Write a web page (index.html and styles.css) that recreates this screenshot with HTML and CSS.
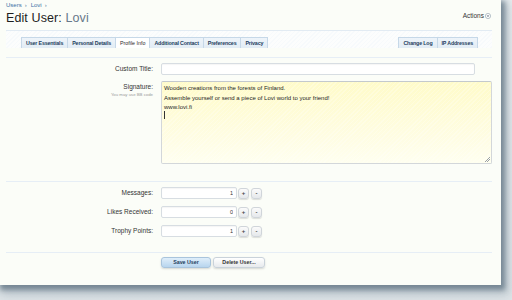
FILE: index.html
```html
<!DOCTYPE html>
<html>
<head>
<meta charset="utf-8">
<link rel="stylesheet" href="styles.css">
</head>
<body>
<div class="window">
  <div class="header">
    <div class="crumbs"><a class="crumb">Users</a><span class="sep">›</span><a class="crumb">Lovi</a><span class="sep">›</span></div>
    <div class="titlerow">
      <h1 class="title">Edit User: <span class="name">Lovi</span></h1>
      <div class="actions">Actions <span class="acticon"><svg width="6" height="6" viewBox="0 0 6 6"><circle cx="3" cy="3" r="2.6" fill="#fff" stroke="#8a9aa8" stroke-width="0.6"/><path d="M1.7 2.4 L4.3 2.4 L3 3.9 Z" fill="#5a6a78"/></svg></span></div>
    </div>
  </div>
  <div class="tabbar">
    <div class="tabs">
      <span class="tab">User Essentials</span><span class="tab">Personal Details</span><span class="tab active">Profile Info</span><span class="tab">Additional Contact</span><span class="tab">Preferences</span><span class="tab">Privacy</span>
    </div>
    <div class="tabs">
      <span class="tab">Change Log</span><span class="tab">IP Addresses</span>
    </div>
  </div>
  <div class="divider first"></div>
  <div class="row r-title">
    <div class="label">Custom Title:</div>
    <div class="field"><input class="text wide" type="text"></div>
  </div>
  <div class="row r-sig">
    <div class="label"><div>Signature:</div><div class="hint">You may use BB code</div></div>
    <div class="field"><div class="sigwrap"><textarea class="sig">Wooden creations from the forests of Finland.
Assemble yourself or send a piece of Lovi world to your friend!
www.lovi.fi
</textarea><span class="grip"></span><span class="caret"></span></div></div>
  </div>
  <div class="divider second"></div>
  <div class="row r-num">
    <div class="label">Messages:</div>
    <div class="field spin"><input class="text num" type="text" value="1"><span class="sbtn">+</span><span class="sbtn minus">-</span></div>
  </div>
  <div class="row r-num">
    <div class="label">Likes Received:</div>
    <div class="field spin"><input class="text num" type="text" value="0"><span class="sbtn">+</span><span class="sbtn minus">-</span></div>
  </div>
  <div class="row r-num">
    <div class="label">Trophy Points:</div>
    <div class="field spin"><input class="text num" type="text" value="1"><span class="sbtn">+</span><span class="sbtn minus">-</span></div>
  </div>
  <div class="divider third"></div>
  <div class="row r-btns">
    <div class="label"></div>
    <div class="field"><span class="button primary">Save User</span><span class="button">Delete User...</span></div>
  </div>
</div>
</body>
</html>
```

FILE: styles.css
```css
html, body {
  margin: 0;
  padding: 0;
}
body {
  width: 512px;
  height: 300px;
  overflow: hidden;
  background: linear-gradient(180deg, #e9edef, #dfe5e8);
  font-family: "Liberation Sans", Arial, sans-serif;
}
.window {
  width: 501px;
  height: 285px;
  background: #fbfdf8;
  box-shadow: 2px 3px 5px 2px rgba(95, 115, 130, 0.75), 4px 6px 10px 4px rgba(120, 140, 155, 0.35);
  overflow: hidden;
}
.header {
  padding: 2px 10px 0 6px;
}
.crumbs {
  font-size: 6px;
  line-height: 7px;
  height: 7px;
  color: #2e68a3;
}
.crumb { color: #3a6fa6; }
.sep { margin: 0 4px 0 3px; color: #5d7f9e; }
.titlerow {
  display: flex;
  justify-content: space-between;
  align-items: flex-start;
  margin-top: 2px;
}
.title {
  margin: 0;
  font-weight: normal;
  font-size: 12.5px;
  line-height: 14px;
  color: #1e1e1e;
  letter-spacing: 0.1px;
}
.name { color: #67788a; }
.actions {
  font-size: 6.5px;
  line-height: 7px;
  margin-top: 1px;
  color: #333;
  display: flex;
  align-items: center;
  gap: 1px;
}
.acticon { display: inline-flex; }
.tabbar {
  margin: 5px 9px 0 6px;
  height: 17px;
  border-top: 1px solid #e2ebf3;
  background: repeating-linear-gradient(135deg, #f7fafc 0 1px, #fcfdfd 1px 3px);
  display: flex;
  justify-content: space-between;
  align-items: flex-end;
  padding: 0 15px;
}
.tabs { display: flex; }
.tab {
  font-size: 5.3px;
  line-height: 9px;
  height: 9px;
  padding: 1px 4px 0;
  border: 1px solid #c6d8e8;
  border-bottom: none;
  margin-right: -1px;
  background: linear-gradient(180deg, #eef4fa, #e2ecf5);
  color: #23405e;
  font-weight: bold;
  letter-spacing: -0.15px;
}
.tab.active {
  background: #ffffff;
  color: #2a2a2a;
  font-weight: normal;
  letter-spacing: 0;
}
.divider {
  margin: 0 9px 0 6px;
  border-top: 1px solid #e6eef6;
}
.divider.first { margin-top: 9px; }
.row { display: flex; }
.label {
  width: 153px;
  flex: none;
  text-align: right;
  font-size: 6.5px;
  line-height: 12px;
  color: #333;
}
.field { margin-left: 8px; display: flex; align-items: flex-start; }
.r-title { margin-top: 5px; }
.text {
  box-sizing: border-box;
  height: 12px;
  border: 1px solid #d7dde2;
  border-radius: 2px;
  background: #ffffff;
  box-shadow: inset 0 1px 1px rgba(0, 0, 0, 0.04);
  margin: 0;
  padding: 0 3px;
  font-family: "Liberation Sans", Arial, sans-serif;
  font-size: 5.5px;
  color: #333;
  outline: none;
}
.wide { width: 314px; }
.r-sig { margin-top: 6px; }
.r-sig .label { padding-top: 2px; line-height: 8px; }
.hint { font-size: 4.3px; line-height: 6px; color: #9a9a9a; margin-top: 1px; }
.sigwrap { position: relative; display: flex; }
.sig {
  box-sizing: border-box;
  width: 331px;
  height: 83px;
  margin: 0;
  border: 1px solid #d3d7da;
  border-top-color: #c4c9cd;
  border-radius: 2px;
  padding: 2px 2px;
  background: repeating-linear-gradient(135deg, rgba(255,255,255,0.25) 0 1px, rgba(255,255,255,0) 1px 3px), linear-gradient(180deg, #fffbc9, #fffde4 70%, #fffff0);
  font-family: "Liberation Sans", Arial, sans-serif;
  font-size: 6px;
  line-height: 9.5px;
  color: #1e1e1e;
  resize: none;
  outline: none;
  overflow: hidden;
}
.grip {
  position: absolute;
  right: 2px;
  bottom: 2px;
  width: 5px;
  height: 5px;
  background: linear-gradient(135deg, transparent 0 45%, #9aa0a6 45% 55%, transparent 55% 68%, #9aa0a6 68% 78%, transparent 78%);
}
.caret {
  position: absolute;
  left: 3px;
  top: 30px;
  width: 1px;
  height: 8px;
  background: #333;
}
.divider.second { margin-top: 17px; }
.r-num { margin-top: 7px; }
.divider.second + .r-num { margin-top: 5px; }
.num { width: 76px; text-align: right; }
.sbtn {
  box-sizing: border-box;
  width: 11px;
  height: 11px;
  margin-left: 1px;
  margin-top: 1px;
  border: 1px solid #d0d5da;
  border-radius: 3px;
  background: linear-gradient(180deg, #fbfbfb, #e5e8eb);
  box-shadow: 0 1px 1px rgba(0, 0, 0, 0.12);
  font-size: 6px;
  line-height: 9px;
  text-align: center;
  font-weight: bold;
  color: #444;
}
.sbtn.minus { margin-left: 2px; }
.divider.third { margin-top: 15px; }
.r-btns { margin-top: 4px; }
.button {
  box-sizing: border-box;
  height: 11px;
  width: 50px;
  border: 1px solid #c9d2da;
  border-radius: 3px;
  background: linear-gradient(180deg, #ffffff, #e7eaed);
  box-shadow: 0 1px 2px rgba(0, 0, 0, 0.15);
  font-size: 5.3px;
  line-height: 9px;
  text-align: center;
  font-weight: bold;
  color: #333;
  margin-right: 2px;
}
.button + .button { width: 52px; }
.button.primary {
  background: linear-gradient(180deg, #dfeefa, #b8d5ee);
  border-color: #a9c4dc;
  color: #23405e;
}
```
